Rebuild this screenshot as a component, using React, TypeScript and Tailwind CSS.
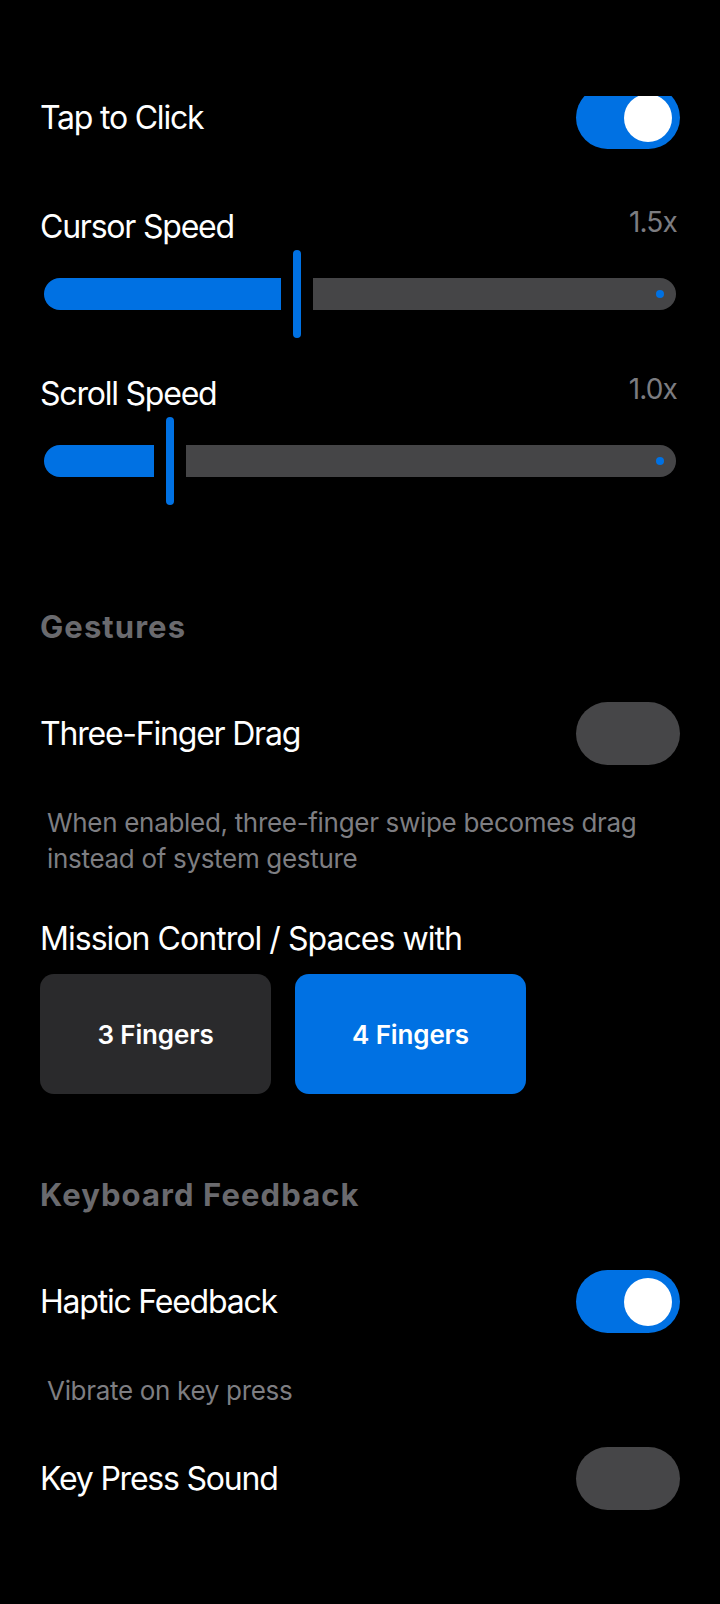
import { useState } from "react";

const font = { fontFamily: "Inter, 'Noto Sans', sans-serif" };

function Toggle({ on, onChange }: { on: boolean; onChange: () => void }) {
  return (
    <button
      onClick={onChange}
      className={`flex h-[63px] w-[104px] shrink-0 items-center rounded-full px-[8px] ${
        on ? "justify-end bg-[#0071e3]" : "justify-start bg-[#464648]"
      }`}
    >
      {on && <span className="h-[48px] w-[48px] rounded-full bg-white" />}
    </button>
  );
}

function ToggleRow({
  label,
  on,
  onChange,
}: {
  label: string;
  on: boolean;
  onChange: () => void;
}) {
  return (
    <div className="flex h-[63px] items-center justify-between">
      <span className="text-[32px] leading-[40px] tracking-[-0.038em] text-white">
        {label}
      </span>
      <Toggle on={on} onChange={onChange} />
    </div>
  );
}

function SpeedSlider({
  label,
  value,
  min,
  max,
}: {
  label: string;
  value: number;
  min: number;
  max: number;
}) {
  const width = 632;
  const frac = (value - min) / (max - min);
  const fill = frac * width - 16;

  return (
    <div className="flex flex-col">
      <div className="flex items-start justify-between">
        <span className="text-[32px] leading-[40px] tracking-[-0.038em] text-white">
          {label}
        </span>
        <span className="mr-[3px] text-[28px] leading-[31px] tracking-[-0.03em] text-[#7c7c80]">
          {value.toFixed(1)}x
        </span>
      </div>
      <div className="mt-[3px] ml-[4px] mr-[4px] flex h-[88px] items-center">
        <div
          className="h-[32px] shrink-0 rounded-l-full rounded-r-[4px] bg-[#0071e3]"
          style={{ width: fill }}
        />
        <div className="mx-[12px] h-[88px] w-[8px] shrink-0 rounded-full bg-[#0071e3]" />
        <div className="flex h-[32px] flex-1 items-center justify-end rounded-l-[4px] rounded-r-full bg-[#454547] pr-[12px]">
          <span className="h-[8px] w-[8px] rounded-full bg-[#0071e3]" />
        </div>
      </div>
    </div>
  );
}

function SectionHeader({ title }: { title: string }) {
  return (
    <h3 className="text-[31px] font-bold leading-[40px] tracking-[0.035em] text-[#6a6a6e]">
      {title}
    </h3>
  );
}

function Hint({ children }: { children: string }) {
  return (
    <p className="pl-[7px] pr-[20px] text-[26px] leading-[36px] tracking-[-0.012em] text-[#7e7e82]">
      {children}
    </p>
  );
}

export default function App() {
  const [tapToClick, setTapToClick] = useState(true);
  const [threeFingerDrag, setThreeFingerDrag] = useState(false);
  const [fingers, setFingers] = useState(4);
  const [haptic, setHaptic] = useState(true);
  const [keySound, setKeySound] = useState(false);

  return (
    <div className="min-h-screen w-full bg-black" style={font}>
      <div className="h-[96px]" />
      <div className="overflow-hidden">
        <div className="-mt-[10px] flex flex-col pl-[40px] pr-[40px] pb-[95px]">
          <ToggleRow
            label="Tap to Click"
            on={tapToClick}
            onChange={() => setTapToClick(!tapToClick)}
          />

          <div className="mt-[58px]">
            <SpeedSlider label="Cursor Speed" value={1.5} min={0.5} max={3} />
          </div>
          <div className="mt-[36px]">
            <SpeedSlider label="Scroll Speed" value={1.0} min={0.5} max={3} />
          </div>

          <div className="mt-[102px]">
            <SectionHeader title="Gestures" />
          </div>
          <div className="mt-[55px]">
            <ToggleRow
              label="Three-Finger Drag"
              on={threeFingerDrag}
              onChange={() => setThreeFingerDrag(!threeFingerDrag)}
            />
          </div>
          <div className="mt-[40px]">
            <Hint>
              When enabled, three-finger swipe becomes drag instead of system
              gesture
            </Hint>
          </div>

          <div className="mt-[42px] text-[32px] leading-[40px] tracking-[-0.03em] text-white">
            Mission Control / Spaces with
          </div>
          <div className="mt-[15px] flex gap-[24px]">
            {[3, 4].map((n) => (
              <button
                key={n}
                onClick={() => setFingers(n)}
                className={`flex h-[120px] w-[231px] items-center justify-center rounded-[14px] text-[26px] font-semibold tracking-[-0.005em] text-white ${
                  fingers === n ? "bg-[#0071e3]" : "bg-[#2a2a2c]"
                }`}
              >
                {n} Fingers
              </button>
            ))}
          </div>

          <div className="mt-[81px]">
            <SectionHeader title="Keyboard Feedback" />
          </div>
          <div className="mt-[55px]">
            <ToggleRow
              label="Haptic Feedback"
              on={haptic}
              onChange={() => setHaptic(!haptic)}
            />
          </div>
          <div className="mt-[40px]">
            <Hint>Vibrate on key press</Hint>
          </div>
          <div className="mt-[38px]">
            <ToggleRow
              label="Key Press Sound"
              on={keySound}
              onChange={() => setKeySound(!keySound)}
            />
          </div>
        </div>
      </div>
    </div>
  );
}
